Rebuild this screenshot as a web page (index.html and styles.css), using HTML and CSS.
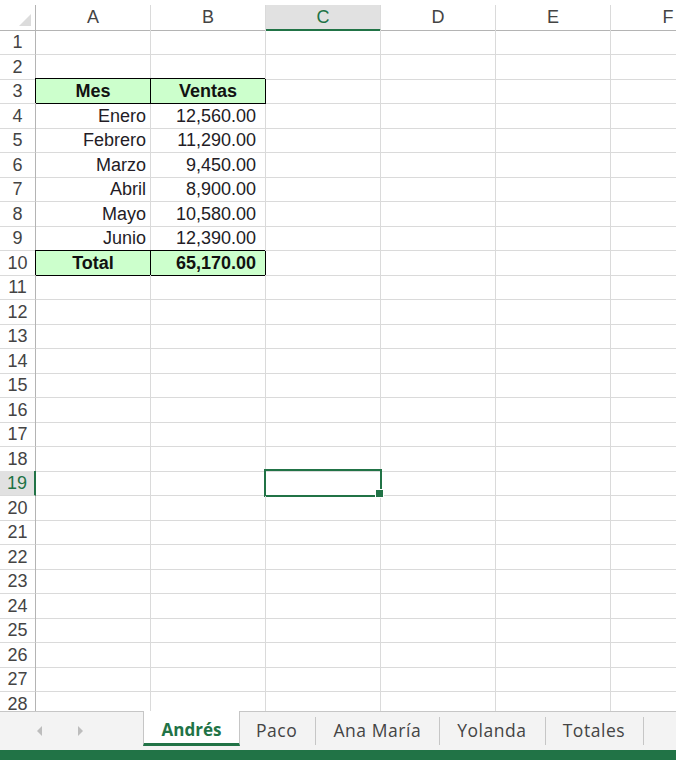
FILE: index.html
```html
<!DOCTYPE html>
<html lang="es">
<head>
<meta charset="utf-8">
<title>Ventas</title>
<link rel="stylesheet" href="styles.css">
</head>
<body>
<div class="app">
  <div class="sheet">
    <div class="row hdr">
      <div class="corner"><span class="tri"></span></div>
      <div class="ch">A</div><div class="ch">B</div><div class="ch on">C</div><div class="ch">D</div><div class="ch">E</div><div class="ch">F</div>
    </div>
    <div class="row"><div class="rh">1</div><div></div><div></div><div></div><div></div><div></div><div></div></div>
    <div class="row"><div class="rh">2</div><div></div><div></div><div></div><div></div><div></div><div></div></div>
    <div class="row"><div class="rh">3</div><div class="t b ctr">Mes</div><div class="t b ctr">Ventas</div><div></div><div></div><div></div><div></div></div>
    <div class="row"><div class="rh">4</div><div class="v">Enero</div><div class="v num">12,560.00</div><div></div><div></div><div></div><div></div></div>
    <div class="row"><div class="rh">5</div><div class="v">Febrero</div><div class="v num">11,290.00</div><div></div><div></div><div></div><div></div></div>
    <div class="row"><div class="rh">6</div><div class="v">Marzo</div><div class="v num">9,450.00</div><div></div><div></div><div></div><div></div></div>
    <div class="row"><div class="rh">7</div><div class="v">Abril</div><div class="v num">8,900.00</div><div></div><div></div><div></div><div></div></div>
    <div class="row"><div class="rh">8</div><div class="v">Mayo</div><div class="v num">10,580.00</div><div></div><div></div><div></div><div></div></div>
    <div class="row"><div class="rh">9</div><div class="v">Junio</div><div class="v num">12,390.00</div><div></div><div></div><div></div><div></div></div>
    <div class="row"><div class="rh">10</div><div class="t b ctr">Total</div><div class="t b num">65,170.00</div><div></div><div></div><div></div><div></div></div>
    <div class="row"><div class="rh">11</div><div></div><div></div><div></div><div></div><div></div><div></div></div>
    <div class="row"><div class="rh">12</div><div></div><div></div><div></div><div></div><div></div><div></div></div>
    <div class="row"><div class="rh">13</div><div></div><div></div><div></div><div></div><div></div><div></div></div>
    <div class="row"><div class="rh">14</div><div></div><div></div><div></div><div></div><div></div><div></div></div>
    <div class="row"><div class="rh">15</div><div></div><div></div><div></div><div></div><div></div><div></div></div>
    <div class="row"><div class="rh">16</div><div></div><div></div><div></div><div></div><div></div><div></div></div>
    <div class="row"><div class="rh">17</div><div></div><div></div><div></div><div></div><div></div><div></div></div>
    <div class="row"><div class="rh">18</div><div></div><div></div><div></div><div></div><div></div><div></div></div>
    <div class="row"><div class="rh on">19</div><div></div><div></div><div class="sel"></div><div></div><div></div><div></div></div>
    <div class="row"><div class="rh">20</div><div></div><div></div><div></div><div></div><div></div><div></div></div>
    <div class="row"><div class="rh">21</div><div></div><div></div><div></div><div></div><div></div><div></div></div>
    <div class="row"><div class="rh">22</div><div></div><div></div><div></div><div></div><div></div><div></div></div>
    <div class="row"><div class="rh">23</div><div></div><div></div><div></div><div></div><div></div><div></div></div>
    <div class="row"><div class="rh">24</div><div></div><div></div><div></div><div></div><div></div><div></div></div>
    <div class="row"><div class="rh">25</div><div></div><div></div><div></div><div></div><div></div><div></div></div>
    <div class="row"><div class="rh">26</div><div></div><div></div><div></div><div></div><div></div><div></div></div>
    <div class="row"><div class="rh">27</div><div></div><div></div><div></div><div></div><div></div><div></div></div>
    <div class="row"><div class="rh">28</div><div></div><div></div><div></div><div></div><div></div><div></div></div>
  </div>
  <div class="tabs">
    <div class="nav">
      <svg class="arrow" width="6" height="10" viewBox="0 0 6 10"><path d="M5 0 L0 5 L5 10 Z" fill="#bdbdbd"/></svg>
      <svg class="arrow" width="6" height="10" viewBox="0 0 6 10"><path d="M1 0 L6 5 L1 10 Z" fill="#bdbdbd"/></svg>
    </div>
    <div class="tab active">Andrés</div>
    <div class="tab first">Paco</div>
    <div class="tab">Ana María</div>
    <div class="tab">Yolanda</div>
    <div class="tab">Totales</div>
    <div class="fill"></div>
  </div>
  <div class="status"></div>
</div>
</body>
</html>
```
FILE: styles.css
```css
* { box-sizing: border-box; margin: 0; padding: 0; }
html, body { width: 676px; height: 760px; overflow: hidden; background: #fff; }
body { font-family: "Liberation Sans", Arial, sans-serif; color: #222; }

.app { display: flex; flex-direction: column; height: 760px; }

.sheet { height: 711px; flex: none; overflow: hidden; padding-top: 5px; }

.row {
  display: grid;
  grid-template-columns: 36px repeat(6, 115px);
  height: 24.5px;
}
.row > div {
  position: relative;
  border-right: 1px solid #dadada;
  border-bottom: 1px solid #dadada;
}

/* column header row */
.row.hdr { height: 25px; }
.row.hdr > div { border-bottom-color: #b4b4b4; }
.corner { border-right-color: #b4b4b4 !important; }
.tri {
  position: absolute;
  right: 4px;
  bottom: 4px;
  width: 0;
  height: 0;
  border-left: 12px solid transparent;
  border-bottom: 12px solid #dcdcdc;
}
.ch {
  text-align: center;
  font-size: 18px;
  line-height: 24px;
  color: #444;
}
.ch.on {
  background: #e1e1e1;
  color: #217346;
  border-bottom: 2px solid #217346 !important;
}

/* row headers */
.rh {
  border-right-color: #b4b4b4 !important;
  text-align: center;
  font-size: 18px;
  line-height: 24px;
  color: #444;
}
.rh.on {
  background: #e1e1e1;
  color: #217346;
  border-right: 2px solid #217346 !important;
}

/* data cells */
.v, .t {
  display: flex;
  align-items: flex-end;
  justify-content: flex-end;
  font-size: 18px;
  line-height: 20px;
  padding-right: 4px;
  padding-bottom: 2px;
  color: #231c26;
}
.num { padding-right: 9px; }
.ctr { justify-content: center; padding-right: 0; }
.b { font-weight: bold; color: #111; }
.t {
  background: #ccffcc;
  border-right-color: #000 !important;
  border-bottom-color: #000 !important;
  box-shadow: -1px -1px 0 0 #000;
}

/* selected cell */
.sel::after {
  content: "";
  position: absolute;
  left: -2px;
  top: -2px;
  right: -2px;
  bottom: -2px;
  border: 2px solid #217346;
}
.sel::before {
  content: "";
  position: absolute;
  right: -4px;
  bottom: -3px;
  width: 7px;
  height: 7px;
  background: #217346;
  border: 1px solid #fff;
  z-index: 2;
}

/* sheet tabs */
.tabs {
  height: 39px;
  flex: none;
  display: flex;
  align-items: flex-start;
  background: #f3f3f3;
  font-family: "Open Sans", "Noto Sans", sans-serif;
  font-size: 17.5px;
  letter-spacing: 0.55px;
  color: #444;
}
.nav {
  width: 143px;
  height: 100%;
  border-top: 1px solid #c6c6c6;
  display: flex;
  align-items: center;
  gap: 34px;
  padding-left: 37px;
  padding-bottom: 1px;
}
.tab {
  position: relative;
  height: 100%;
  border-top: 1px solid #c6c6c6;
  padding: 0 19px 2px 17px;
  display: flex;
  align-items: center;
}
.tab.first { padding-left: 16px; }
.tab::after {
  content: "";
  position: absolute;
  right: 0;
  top: 5px;
  bottom: 5px;
  width: 1px;
  background: #c6c6c6;
}
.tab.active {
  width: 97px;
  height: 35px;
  padding: 4px 0 0;
  justify-content: center;
  background: #fff;
  border-top: none;
  border-left: 1px solid #c6c6c6;
  border-right: 1px solid #c6c6c6;
  border-bottom: 3px solid #217346;
  color: #217346;
  font-size: 17px;
  letter-spacing: 0;
  font-weight: bold;
}
.tab.active::after { display: none; }
.fill { flex: 1; height: 100%; border-top: 1px solid #c6c6c6; }

.status { height: 10px; flex: none; background: #217346; }
```
